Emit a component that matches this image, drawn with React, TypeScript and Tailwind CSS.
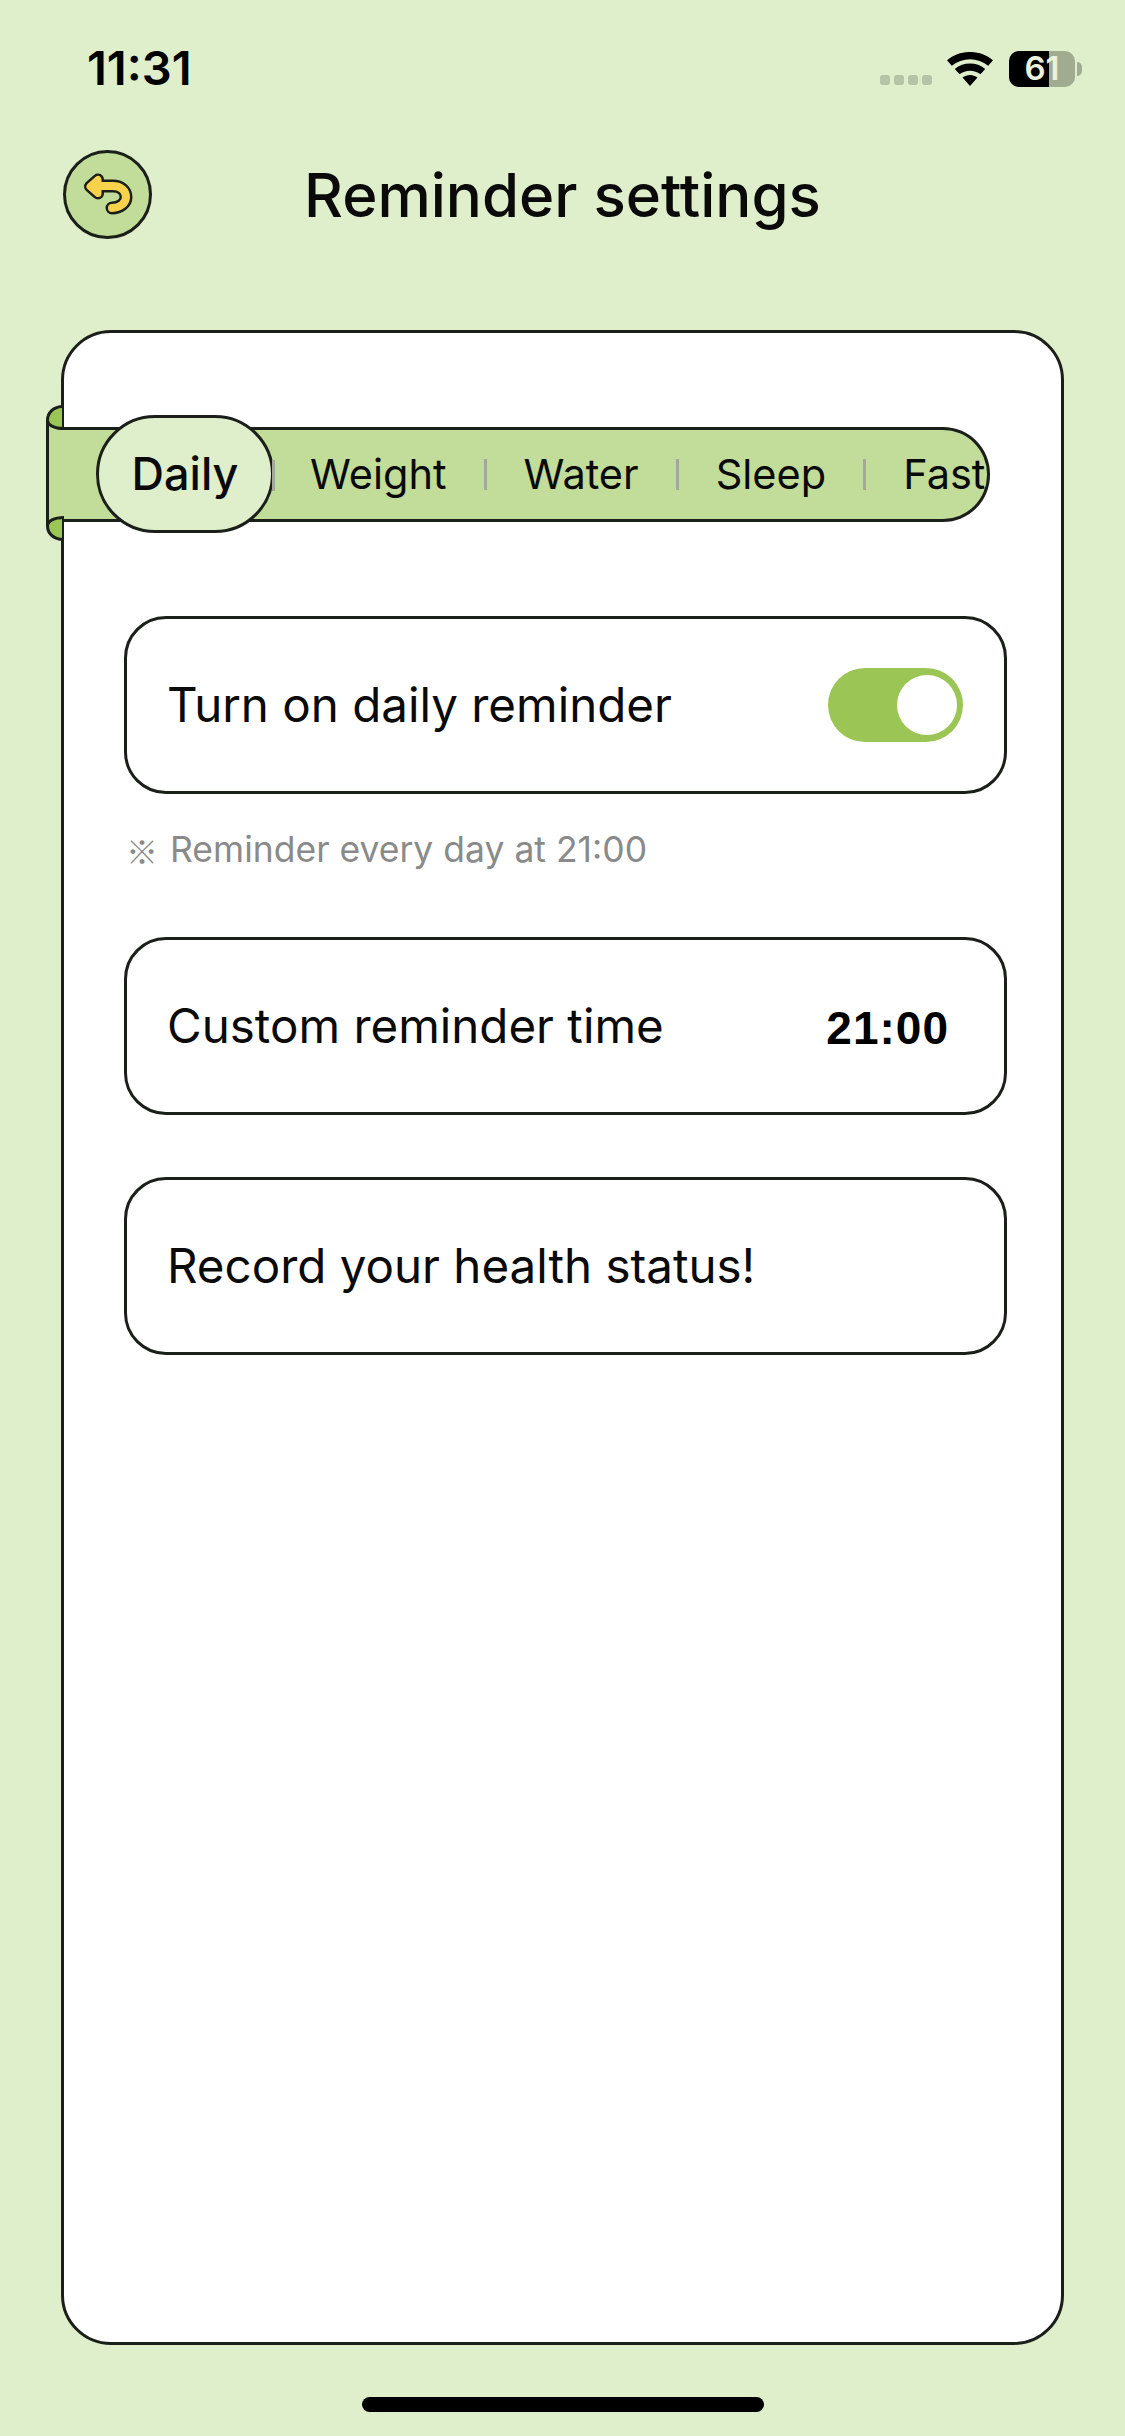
const sans = "font-['Inter','Noto_Sans_CJK_SC',sans-serif]";

function BackIcon() {
  return (
    <svg viewBox="0 0 89 89" className="size-[89px]" fill="none" aria-hidden>
      <circle cx="44.5" cy="44.5" r="43" fill="#c2dc9a" stroke="#1b1f1a" strokeWidth="3" />
      <g strokeLinecap="round" strokeLinejoin="round">
        <path d="M33 36H50C58 36 63 41 63 47C63 53 57 58 49 58" stroke="#1b1f1a" strokeWidth="13" />
        <path d="M27 36.5L35 29.5V43.5Z" fill="#1b1f1a" stroke="#1b1f1a" strokeWidth="12" />
        <path d="M33 36H50C58 36 63 41 63 47C63 53 57 58 49 58" stroke="#f8d24a" strokeWidth="8" />
        <path d="M27 36.5L35 29.5V43.5Z" fill="#f8d24a" stroke="#f8d24a" strokeWidth="7" />
      </g>
    </svg>
  );
}

function Wifi() {
  return (
    <svg viewBox="0 0 46 34" className="h-[34px] w-[46px]" aria-hidden>
      <path d="M23 34L15.5 25.5C19.8 22 26.2 22 30.5 25.5Z" fill="#000" />
      <path d="M12.5 22.3L7.8 17C16.4 9.7 29.6 9.7 38.2 17L33.5 22.3C27.4 17.4 18.6 17.4 12.5 22.3Z" fill="#000" />
      <path d="M4.8 13.7L0 8.3C13 -2.8 33 -2.8 46 8.3L41.2 13.7C30.8 5 15.2 5 4.8 13.7Z" fill="#000" />
    </svg>
  );
}

function Battery() {
  return (
    <div className="flex items-center">
      <div className="relative flex h-[36px] w-[66px] items-center justify-center rounded-[10px] bg-[#a0ab90]">
        <div className="absolute inset-y-0 left-0 w-[40px] rounded-l-[10px] bg-black" />
        <span className={`relative text-[33px] font-semibold leading-none text-[#e9f2dc] ${sans}`}>61</span>
      </div>
      <div className="ml-[2px] h-[14px] w-[5px] rounded-r-full bg-[#a0ab90]" />
    </div>
  );
}

// folded ribbon ends behind the panel edge
function RibbonFold() {
  return (
    <svg viewBox="0 0 18 136" className="absolute left-0 top-[-22px] h-[136px] w-[18px]" fill="none" aria-hidden>
      <path d="M16 1.5C7 2 1.5 8 1.5 15V121C1.5 128 7 134 16 134.500Z" fill="#c2dc9a" />
      <path d="M16 1.500C7 2 1.500 8 1.500 15C1.500 20 8 23.500 16 23.500Z" fill="#9bc655" />
      <path d="M16 112.500C8 112.500 1.500 116 1.500 121C1.500 128 7 134 16 134.500Z" fill="#9bc655" />
      <path
        d="M16 1.500C7 2 1.500 8 1.500 15V121C1.500 128 7 134 16 134.500M1.500 15C1.500 20 8 23.500 18 23.500M1.500 121C1.500 116 8 112.500 18 112.500"
        stroke="#1b1f1a"
        strokeWidth="3"
      />
    </svg>
  );
}

function Separator({ className = "" }: { className?: string }) {
  return <div className={`h-[31px] w-[3px] shrink-0 bg-[#a3a89b] ${className}`} />;
}

function Tabs() {
  const tabs = ["Weight", "Water", "Sleep", "Fast"];

  return (
    <div className={`relative ml-[-18px] h-[95px] w-[944px] ${sans}`}>
      <div className="flex h-full items-center gap-[37px] overflow-hidden rounded-r-[47px] border-y-[3px] border-r-[3px] border-[#1b1f1a] bg-[#c2dc9a] pl-[264px]">
        {tabs.map((tab, i) => (
          <div key={tab} className="flex shrink-0 items-center gap-[37px]">
            <span className="text-[41.500px] leading-none text-[#0a0a0a]">{tab}</span>
            {i < tabs.length - 1 && <Separator />}
          </div>
        ))}
      </div>
      <RibbonFold />
      <div className="absolute left-[50px] top-[-12px] flex h-[118px] w-[178px] items-center justify-center rounded-[59px] border-[3px] border-[#1b1f1a] bg-[#dfeecb] text-[45px] font-medium text-[#0a0a0a]">
        Daily
      </div>
      <Separator className="absolute left-[226px] top-[33px]" />
    </div>
  );
}

function Row({ children, className = "" }: { children: React.ReactNode; className?: string }) {
  return (
    <div
      className={`ml-[60px] mr-[54px] flex h-[178px] items-center justify-between rounded-[42px] border-[3px] border-[#1b1f1a] pl-[40px] text-[47.500px] text-[#0a0a0a] ${sans} ${className}`}
    >
      {children}
    </div>
  );
}

export default function App() {
  return (
    <div className="flex h-[2436px] w-[1125px] flex-col items-center overflow-hidden bg-[#dfeecb]">
      <div className="flex h-[148px] w-full items-center justify-between pb-[11px] pl-[87px] pr-[43px]">
        <span className={`text-[47px] font-semibold text-black ${sans}`}>11:31</span>
        <div className="flex items-center">
          <div className="mt-[22px] flex gap-[4px]">
            {[0, 1, 2, 3].map((dot) => (
              <div key={dot} className="size-[10px] rounded-[3px] bg-[#b5c4a4]" />
            ))}
          </div>
          <div className="ml-[15px] mr-[16px]">
            <Wifi />
          </div>
          <Battery />
        </div>
      </div>

      <div className="grid h-[89px] w-full grid-cols-[1fr_auto_1fr] items-center pl-[63px]">
        <BackIcon />
        <h1 className={`mr-[63px] mt-[2px] text-[60px] font-medium text-[#0a0a0a] ${sans}`}>Reminder settings</h1>
      </div>

      <div className="mt-[93px] h-[2015px] w-[1003px] rounded-[50px] border-[3px] border-[#1b1f1a] bg-white pt-[94px]">
        <Tabs />

        <Row className="mt-[94px] pr-[41px]">
          <span>Turn on daily reminder</span>
          <div className="flex h-[74px] w-[135px] items-center justify-end rounded-[37px] bg-[#9bc655] pr-[6px]">
            <div className="size-[60px] rounded-full bg-white" />
          </div>
        </Row>

        <p className={`ml-[62px] mt-[37px] flex h-[38px] items-center text-[35.500px] leading-[38px] text-[#8a8a8a] ${sans}`}>
          <span className="mr-[12px] font-['Noto_Sans_CJK_SC',sans-serif] text-[32px]">※</span>
          Reminder every day at 21:00
        </p>

        <Row className="mt-[68px] pr-[55px]">
          <span>Custom reminder time</span>
          <span className="mt-[5px] font-['Liberation_Sans',sans-serif] text-[46px] font-bold tracking-[1px] text-black">21:00</span>
        </Row>

        <Row className="mt-[62px]">
          <span>Record your health status!</span>
        </Row>
      </div>

      <div className="mt-[52px] h-[15px] w-[402px] rounded-full bg-black" />
    </div>
  );
}
